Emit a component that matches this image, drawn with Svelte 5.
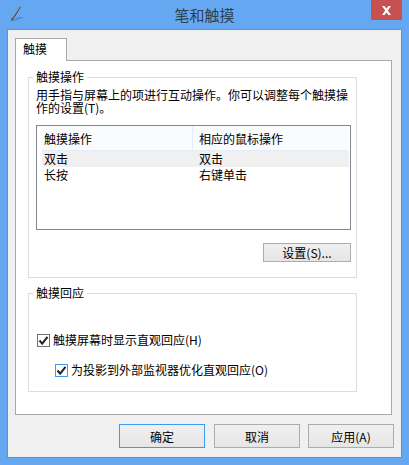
<script lang="ts">
	type Action = { touch: string; mouse: string; selected?: boolean };

	const actions: Action[] = [
		{ touch: '双击', mouse: '双击', selected: true },
		{ touch: '长按', mouse: '右键单击' }
	];

	let showFeedback = $state(true);
	let optimizeProjector = $state(true);
</script>

<div class="window">
	<header class="titlebar">
		<svg class="app-icon" width="16" height="18" viewBox="0 0 16 18">
			<path d="M1 16 L9 12 L14 12 L6 15.5 Z" fill="#4f7fb8" opacity="0.7" />
			<path d="M9.5 1 L11 2 L3.5 14 L1 16.5 L1.6 12.8 Z" fill="#474d55" />
			<path d="M9.5 1 L1.6 12.8 L2.4 13.2 L10.2 1.5 Z" fill="#aab2ba" />
		</svg>
		<h1>笔和触摸</h1>
		<button class="close" type="button" aria-label="关闭">
			<svg width="11" height="9" viewBox="0 0 11 9">
				<path d="M1 0 L3.5 0 L5.5 2.6 L7.5 0 L10 0 L6.8 4.5 L10 9 L7.5 9 L5.5 6.4 L3.5 9 L1 9 L4.2 4.5 Z" fill="#fff" />
			</svg>
		</button>
	</header>

	<div class="client">
		<div class="tabs">
			<div class="tab">触摸</div>
		</div>

		<section class="panel">
			<fieldset class="group first">
				<legend>触摸操作</legend>
				<p class="intro">用手指与屏幕上的项进行互动操作。你可以调整每个触摸操作的设置(T)。</p>

				<div class="list">
					<div class="row head">
						<span>触摸操作</span>
						<span>相应的鼠标操作</span>
					</div>
					{#each actions as action}
						<div class="row" class:selected={action.selected}>
							<span>{action.touch}</span>
							<span>{action.mouse}</span>
						</div>
					{/each}
				</div>

				<div class="settings">
					<button class="btn settings-btn" type="button">设置(S)...</button>
				</div>
			</fieldset>

			<fieldset class="group second">
				<legend>触摸回应</legend>
				<label class="check">
					<input type="checkbox" bind:checked={showFeedback} />
					<span class="box">
						<svg width="13" height="13" viewBox="0 0 13 13">
							<path d="M2.5 6.5 L5.2 9.6 L10.5 2.8" fill="none" stroke="#222" stroke-width="2" />
						</svg>
					</span>
					触摸屏幕时显示直观回应(H)
				</label>
				<label class="check nested">
					<input type="checkbox" bind:checked={optimizeProjector} />
					<span class="box focus">
						<svg width="13" height="13" viewBox="0 0 13 13">
							<path d="M2.5 6.5 L5.2 9.6 L10.5 2.8" fill="none" stroke="#222" stroke-width="2" />
						</svg>
					</span>
					为投影到外部监视器优化直观回应(O)
				</label>
			</fieldset>
		</section>

		<footer class="actions">
			<button class="btn default" type="button">确定</button>
			<button class="btn" type="button">取消</button>
			<button class="btn" type="button">应用(A)</button>
		</footer>
	</div>
</div>

<style>
	:global(body) {
		background: #65a7f1;
	}

	.window {
		width: 409px;
		height: 465px;
		box-sizing: border-box;
		padding: 0 7px 7px 7px;
		display: flex;
		flex-direction: column;
		background: #65a7f1;
		font-family: "Noto Sans CJK SC", "Liberation Sans", sans-serif;
		font-size: 12px;
		color: #000;
	}

	.titlebar {
		height: 29px;
		flex: none;
		display: flex;
		align-items: flex-start;
		justify-content: center;
		position: relative;
	}

	.app-icon {
		position: absolute;
		left: 3px;
		top: 5px;
	}

	h1 {
		margin: 5px 0 0;
		font-size: 15px;
		line-height: 20px;
		font-weight: 400;
		color: #2c3e50;
	}

	.close {
		position: absolute;
		right: 0;
		top: 0;
		width: 31px;
		height: 20px;
		padding: 0;
		border: 0;
		background: #c75050;
		display: flex;
		align-items: center;
		justify-content: center;
	}

	.client {
		flex: 1;
		display: flex;
		flex-direction: column;
		padding: 8px 9px 8px 7px;
		background: #f0f0f0;
		border: 1px solid #5a93d3;
	}

	.tabs {
		display: flex;
		height: 23px;
		flex: none;
		margin-bottom: -1px;
		position: relative;
		z-index: 1;
	}

	.tab {
		width: 52px;
		height: 23px;
		box-sizing: border-box;
		background: #fff;
		border: 1px solid #a9a9a9;
		border-bottom: 0;
		padding-left: 7px;
		line-height: 19px;
	}

	.panel {
		height: 355px;
		flex: none;
		box-sizing: border-box;
		background: #fff;
		border: 1px solid #a9a9a9;
		padding: 9px 34px 0 12px;
		display: flex;
		flex-direction: column;
		gap: 8px;
	}

	.group {
		margin: 0;
		padding: 0 5px 0 7px;
		min-width: 0;
		border: 1px solid #dcdcdc;
		box-sizing: border-box;
	}

	.first {
		height: 208px;
	}

	.second {
		height: 106px;
	}

	legend {
		padding: 0 3px;
		margin-left: -3px;
		line-height: 14px;
	}

	.intro {
		margin: 4px 0 0;
		line-height: 13px;
		height: 37px;
	}

	.list {
		height: 105px;
		box-sizing: border-box;
		border: 1px solid #828790;
	}

	.row {
		display: grid;
		grid-template-columns: 150px 1fr;
		margin-left: 5px;
		margin-right: 1px;
		height: 16px;
		line-height: 16px;
	}

	.row span {
		padding-left: 2px;
	}

	.row span + span {
		padding-left: 7px;
	}

	.head {
		height: 25px;
		line-height: 26px;
		margin-right: 2px;
		background: #fafbfd;
		border-bottom: 1px solid #e3edf9;
		box-sizing: border-box;
	}

	.head span + span {
		border-left: 1px solid #e3edf9;
		padding-left: 6px;
	}

	.selected {
		background: #f0f0f0;
	}

	.settings {
		display: flex;
		justify-content: flex-end;
		margin-top: 13px;
	}

	.btn {
		width: 86px;
		height: 24px;
		padding: 0;
		box-sizing: border-box;
		border: 1px solid #acacac;
		background: linear-gradient(#f0f0f0, #e5e5e5);
		font: inherit;
		color: #000;
	}

	.settings-btn {
		width: 88px;
		height: 19px;
		line-height: 15px;
	}

	.default {
		border-color: #3c9af0;
		margin-right: 1px;
	}

	.check {
		display: flex;
		align-items: center;
		height: 14px;
		line-height: 14px;
		gap: 3px;
		margin-left: 1px;
		white-space: nowrap;
	}

	.second .check:first-of-type {
		margin-top: 33px;
	}

	.nested {
		margin-top: 16px;
		margin-left: 19px;
	}

	.check input {
		display: none;
	}

	.box {
		width: 13px;
		height: 13px;
		flex: none;
		box-sizing: border-box;
		border: 1px solid #707070;
		background: #fff;
		display: flex;
		align-items: center;
		justify-content: center;
	}

	.box svg {
		flex: none;
	}

	.focus {
		border-color: #3c9af0;
	}

	.actions {
		display: flex;
		justify-content: flex-end;
		gap: 8px;
		margin-top: 9px;
		margin-right: -2px;
	}
</style>
